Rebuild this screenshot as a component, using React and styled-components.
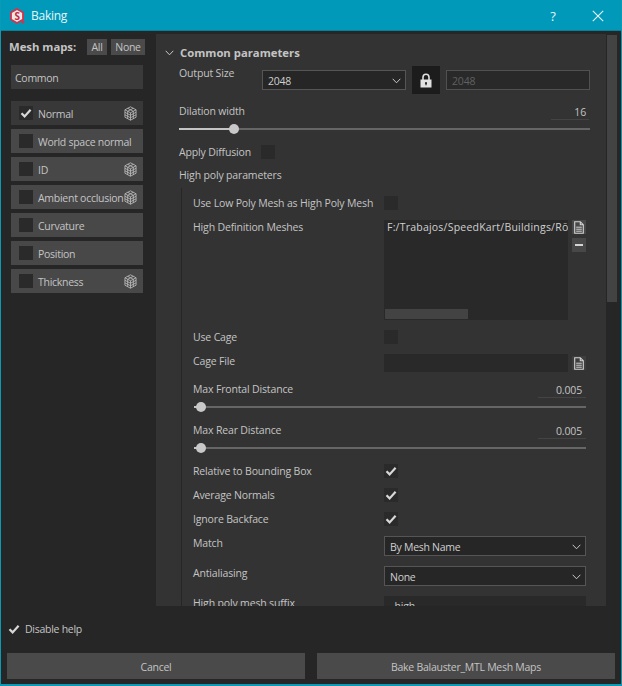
import React from "react";
import styled, { createGlobalStyle } from "styled-components";

const Global = createGlobalStyle`
  html, body { margin: 0; padding: 0; background: #262626; }
  #root { width: 622px; height: 686px; overflow: hidden; }
  * { box-sizing: border-box; }
`;

const Win = styled.div`
  width: 622px; height: 686px; display: flex; flex-direction: column;
  background: #262626; border: 1px solid #0b9ab6; border-width: 0 1px 2px 1px;
  font: 10.5px/14px "Open Sans", sans-serif; letter-spacing: -0.27px; color: #c4c4c4; overflow: hidden;
`;
const TitleBar = styled.div`
  height: 31px; flex: none; margin: 0 -1px; padding: 1px 9px 0; background: #0099b9;
  display: flex; align-items: center; color: #e6f6fa; font-size: 12px;
  border-bottom: 1px solid #0a7f98;
`;
const TitleText = styled.span` margin-left: 6px; flex: 1; `;
const Help = styled.span` width: 14px; margin-right: 32px; font-size: 13px; text-align: center; `;
const CloseIcon = styled.svg` width: 12px; height: 12px; margin-right: 9px; `;
const Main = styled.div` flex: none; height: 572px; margin-top: 3px; display: flex; `;
const Side = styled.div` width: 155px; flex: none; padding: 5px 0 0 10px; `;
const MeshHead = styled.div` display: flex; align-items: center; height: 16px; `;
const MeshTitle = styled.b` width: 78px; margin-left: -2px; font-size: 11.3px; letter-spacing: 0; `;
const SmallBtn = styled.div`
  height: 16px; width: ${p => p.$w}px; margin-left: ${p => p.$ml}px; background: #4a4a4a;
  text-align: center; line-height: 16px;
`;
const Common = styled.div`
  width: 132px; height: 24px; margin: 10px 0 12px; padding-left: 4px; background: #3a3a3a;
  line-height: 26px;
`;
const MapList = styled.div` display: flex; flex-direction: column; gap: 4px; width: 132px; `;
const MapRow = styled.div`
  height: 24px; display: flex; align-items: center; padding: 0 6px 0 8px;
  background: ${p => (p.$on ? "#383838" : "#484848")}; white-space: nowrap;
`;
const MapName = styled.span` margin-left: 5px; flex: 1; padding-top: 1px; `;
const Box = styled.span`
  width: 14px; height: 14px; flex: none; background: #2a2a2a;
  display: inline-flex; align-items: center; justify-content: center;
`;
const Panel = styled.div`
  width: 450px; height: 572px; flex: none; background: #333333; overflow: hidden;
  padding-left: 23px; position: relative; letter-spacing: -0.155px;
`;
const Scroll = styled.div` width: 12px; margin-left: 1px; background: #262626; flex: none; `;
const Thumb = styled.div` height: 267px; margin-top: 1px; width: 10px; background: #434343; `;
const Section = styled.div`
  height: 22px; margin: 8px 0 0 -14px; display: flex; align-items: center; gap: 6px;
  font-weight: 700; font-size: 11.3px; letter-spacing: 0;
`;
const Row = styled.div`
  height: ${p => p.$h}px; margin-top: ${p => p.$mt || 0}px; display: flex;
  align-items: ${p => (p.$top ? "flex-start" : "center")};
  width: ${p => p.$w}px; white-space: nowrap;
`;
const Label = styled.span` width: ${p => p.$w}px; flex: none; `;
const Select = styled.div`
  width: ${p => p.$w}px; height: 20px; flex: none; background: #262626; border: 1px solid #555;
  margin-top: ${p => p.$mt || 0}px; padding: 1px 4px 0 5px; letter-spacing: -0.27px;
  display: flex; align-items: center; justify-content: space-between; color: #cfcfcf;
`;
const LockBtn = styled.div`
  width: 28px; height: 28px; margin: 0 6px; flex: none; background: #1c1c1c;
  display: flex; align-items: center; justify-content: center;
`;
const Input = styled.div`
  width: 144px; height: 20px; margin-top: 4px; background: #292929; border: 1px solid #505050; padding: 1px 5px 0;
  line-height: 18px; color: #606060;
`;
const Value = styled.span`
  margin: 2px ${p => p.$mr}px 0 auto; width: ${p => p.$w}px; border-bottom: 1px solid #444; text-align: right;
  padding: 1px ${p => p.$pr}px 0 0; line-height: 14px;
`;
const Track = styled.div`
  height: 2px; width: ${p => p.$w}px; margin: ${p => p.$mt}px 0 0 ${p => p.$ml || 0}px; background: #666;
  position: relative;
`;
const Fill = styled.div` height: 2px; background: #c4c4c4; `;
const Knob = styled.div`
  width: 10px; height: 10px; border-radius: 50%; background: #c8c8c8; position: absolute;
  top: -4px; left: ${p => p.$x}px;
`;
const Group = styled.div`
  margin: 6px 0 0 2px; padding: 8px 0 0 11px; border-left: 1px solid #262626;
`;
const ListBox = styled.div`
  width: 184px; height: 100px; flex: none; background: #292929; position: relative; padding: 0 0 0 3px;
  overflow: hidden; color: #d0d0d0; letter-spacing: 0.22px;
`;
const HBar = styled.div`
  position: absolute; left: 1px; bottom: 1px; width: 83px; height: 10px; background: #434343;
`;
const SideBtns = styled.div`
  display: flex; flex-direction: column; gap: 4px; margin: ${p => p.$mt || 0}px 0 0 4px;
`;
const IconBtn = styled.div`
  width: 14px; height: 14px; background: ${p => p.$bg || "#484848"};
  display: flex; align-items: center; justify-content: center;
`;
const Minus = styled.span` width: 8px; height: 2px; background: #d4d4d4; `;
const FieldBlock = styled.div` width: 184px; height: 18px; background: #292929; flex: none; `;
const Suffix = styled.div`
  width: 202px; height: 20px; flex: none; background: #292929; padding-left: 6px; line-height: 20px;
`;
const HelpRow = styled.div`
  height: 14px; margin: 16px 0 0 7px; display: flex; align-items: center; gap: 5px;
`;
const Footer = styled.div` display: flex; gap: 12px; margin: 17px 6px 0 6px; `;
const FootBtn = styled.div`
  height: 26px; flex: 1; background: #4a4a4a; text-align: center; line-height: 28px;
`;

const Check = ({ size = 12 }) => (
  <svg width={size} height={size} viewBox="0 0 12 12">
    <path d="M1.500 6.300 L4.600 9.400 L10.600 2.800" fill="none" stroke="#d8d8d8" strokeWidth="2.200" />
  </svg>
);
const Cube = () => (
  <svg width="13" height="15" viewBox="0 0 14 16" fill="none" stroke="#bdbdbd" strokeWidth="0.9">
    <path d="M7 .8 13 4v8l-6 3.200L1 12V4z" />
    <path d="M1 4l6 3.200L13 4M7 7.200v8M1 6.700l6 3.200 6-3.200M1 9.400l6 3.200 6-3.200M4 2.400 10 5.600v8M10 2.400 4 5.600v8" />
  </svg>
);
const FileIcon = () => (
  <svg width="10" height="13" viewBox="0 0 10 13">
    <path d="M.7.7h5.600l3 3v8.600H.7z M6.300.7v3h3" fill="none" stroke="#d4d4d4" strokeWidth="1.100" />
    <path d="M2.200 6.200h5.600M2.200 8.200h5.600M2.200 10.200h5.600" stroke="#d4d4d4" strokeWidth="1" />
  </svg>
);
const Chevron = () => (
  <svg width="9" height="6" viewBox="0 0 9 6">
    <path d="M.7.8 4.500 4.800 8.300.8" fill="none" stroke="#c8c8c8" strokeWidth="1" />
  </svg>
);
const Lock = () => (
  <svg width="12" height="15" viewBox="0 0 12 15">
    <path d="M3 7V4.200a3 3 0 0 1 6 0V7" fill="none" stroke="#e0e0e0" strokeWidth="1.600" />
    <path fillRule="evenodd" d="M.5 6.500h11v8H.5zM6 9a1.100 1.100 0 0 0-.6 2v1.200h1.200V11A1.100 1.100 0 0 0 6 9z" fill="#e0e0e0" />
  </svg>
);
const Logo = () => (
  <svg width="16" height="16" viewBox="0 0 16 16">
    <path d="M8 1 14 4.500v7L8 15l-6-3.500v-7z" fill="#e8e8e8" stroke="#d8324a" strokeWidth="1.800" />
    <circle cx="14" cy="14" r="1.500" fill="#d8324a" />
    <text x="8" y="11.500" textAnchor="middle" fontSize="10" fontWeight="700" fontFamily="Open Sans" fill="#c8283e">S</text>
  </svg>
);

const maps = [
  ["Normal", true, true],
  ["World space normal", false, false],
  ["ID", false, true],
  ["Ambient occlusion", false, true],
  ["Curvature", false, false],
  ["Position", false, false],
  ["Thickness", false, true],
];

const CheckRow = ({ label, mt, on, w = 191 }) => (
  <Row $h={14} $mt={mt} $w={393}>
    <Label $w={w}>{label}</Label>
    <Box>{on && <Check />}</Box>
  </Row>
);
const SliderBlock = ({ label, mt }) => (
  <>
    <Row $h={18} $mt={mt} $w={393}>
      <Label $w={191}>{label}</Label>
      <Value $w={48} $pr={4} $mr={0}>0.005</Value>
    </Row>
    <Track $w={392} $mt={8} $ml={1}>
      <Fill style={{ width: 4 }} />
      <Knob $x={2} />
    </Track>
  </>
);
const SelectRow = ({ label, value }) => (
  <Row $h={20} $mt={10} $w={393} $top>
    <Label $w={191}>{label}</Label>
    <Select $w={202}>{value}<Chevron /></Select>
  </Row>
);

export default function App() {
  return (
    <Win>
      <Global />
      <TitleBar>
        <Logo />
        <TitleText>Baking</TitleText>
        <Help>?</Help>
        <CloseIcon viewBox="0 0 12 12">
          <path d="M.8.8l10.400 10.400M11.200.8.8 11.200" stroke="#e6f6fa" strokeWidth="1.100" />
        </CloseIcon>
      </TitleBar>
      <Main>
        <Side>
          <MeshHead>
            <MeshTitle>Mesh maps:</MeshTitle>
            <SmallBtn $w={20} $ml={0}>All</SmallBtn>
            <SmallBtn $w={34} $ml={4}>None</SmallBtn>
          </MeshHead>
          <Common>Common</Common>
          <MapList>
            {maps.map(([name, on, cube]) => (
              <MapRow key={name} $on={on}>
                <Box>{on && <Check />}</Box>
                <MapName>{name}</MapName>
                {cube && <Cube />}
              </MapRow>
            ))}
          </MapList>
        </Side>
        <Panel>
          <Section><Chevron />Common parameters</Section>
          <Row $h={28} $mt={2} $w={411} $top>
            <Label $w={83}>Output Size</Label>
            <Select $w={144} $mt={4}>2048<Chevron /></Select>
            <LockBtn><Lock /></LockBtn>
            <Input>2048</Input>
          </Row>
          <Row $h={18} $mt={8} $w={411}>
            Dilation width
            <Value $w={38} $pr={3} $mr={1}>16</Value>
          </Row>
          <Track $w={411} $mt={8}>
            <Fill style={{ width: 55 }} />
            <Knob $x={50} />
          </Track>
          <CheckRow label="Apply Diffusion" mt={15} w={82} />
          <Row $h={14} $mt={9} $w={411}>High poly parameters</Row>
          <Group>
            <CheckRow label="Use Low Poly Mesh as High Poly Mesh" mt={0} />
            <Row $h={100} $mt={10} $w={393} $top>
              <Label $w={191}>High Definition Meshes</Label>
              <ListBox>
                F:/Trabajos/SpeedKart/Buildings/Rō
                <HBar />
              </ListBox>
              <SideBtns>
                <IconBtn><FileIcon /></IconBtn>
                <IconBtn><Minus /></IconBtn>
              </SideBtns>
            </Row>
            <CheckRow label="Use Cage" mt={10} />
            <Row $h={18} $mt={10} $w={393} $top>
              <Label $w={191}>Cage File</Label>
              <FieldBlock />
              <SideBtns $mt={2}>
                <IconBtn $bg="#3e3e3e"><FileIcon /></IconBtn>
              </SideBtns>
            </Row>
            <SliderBlock label="Max Frontal Distance" mt={8} />
            <SliderBlock label="Max Rear Distance" mt={13} />
            <CheckRow label="Relative to Bounding Box" mt={15} on />
            <CheckRow label="Average Normals" mt={10} on />
            <CheckRow label="Ignore Backface" mt={10} on />
            <SelectRow label="Match" value="By Mesh Name" />
            <SelectRow label="Antialiasing" value="None" />
            <Row $h={20} $mt={10} $w={393} $top>
              <Label $w={191}>High poly mesh suffix</Label>
              <Suffix>_high</Suffix>
            </Row>
          </Group>
        </Panel>
        <Scroll><Thumb /></Scroll>
      </Main>
      <HelpRow><Check />Disable help</HelpRow>
      <Footer>
        <FootBtn>Cancel</FootBtn>
        <FootBtn>Bake Balauster_MTL Mesh Maps</FootBtn>
      </Footer>
    </Win>
  );
}
